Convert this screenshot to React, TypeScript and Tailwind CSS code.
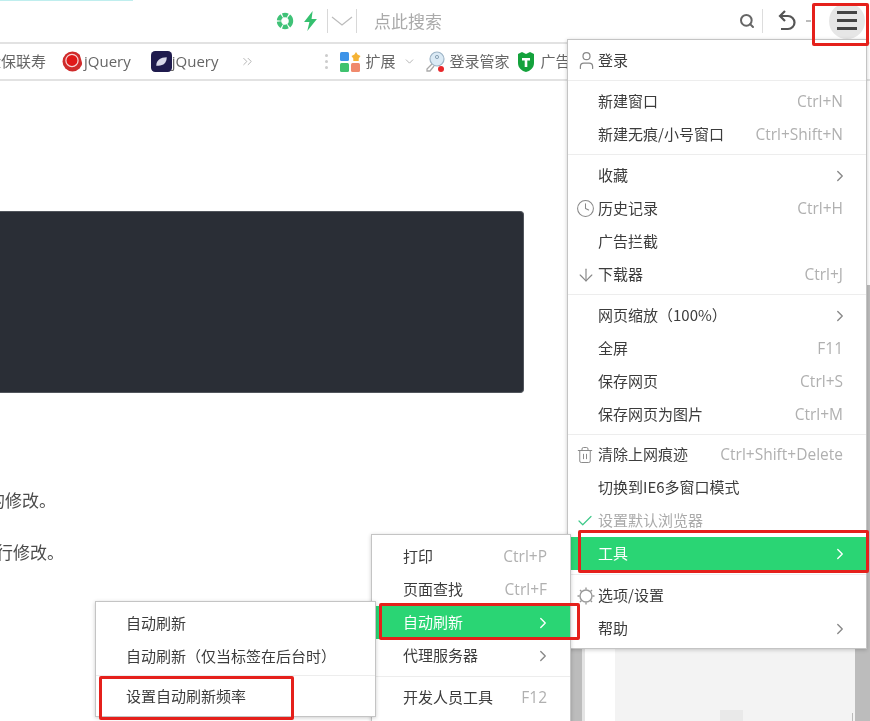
import type { ReactNode } from "react";
import { ArrowDown, Check, ChevronDown, ChevronRight, ChevronsRight, Clock, Search, Trash2, User } from "lucide-react";

const latin = "font-['Open_Sans','Noto_Sans_CJK_SC',sans-serif]";

interface RowProps {
  label: string;
  shortcut?: string;
  arrow?: boolean;
  icon?: ReactNode;
  active?: boolean;
  muted?: boolean;
  indent?: string;
  right?: string;
}

function Row({ label, shortcut, arrow, icon, active, muted, indent = "w-[30px]", right = "pr-[23px]" }: RowProps) {
  return (
    <div className={`flex h-[33px] items-center ${right} ${active ? "bg-[#2ad574] text-white" : muted ? "text-[#aaaaaa]" : "text-[#3c3c3c]"}`}>
      <span className={`flex shrink-0 justify-start pl-[8px] text-[#888888] ${indent}`}>{icon}</span>
      <span className="flex-1 whitespace-nowrap">{label}</span>
      {shortcut && <span className={`${latin} text-[15.5px] text-[#b0b0b0]`}>{shortcut}</span>}
      {arrow && <ChevronRight className={`h-[18px] w-[18px] ${active ? "text-white" : "text-[#888888]"}`} strokeWidth={1.8} />}
    </div>
  );
}

function GearIcon() {
  return (
    <svg viewBox="0 0 20 20" className="h-[20px] w-[20px]" fill="none" stroke="#999999" strokeWidth="1.4">
      <circle cx="10" cy="10" r="6" />
      <path d="M10 1.5v2M10 16.5v2M1.5 10h2M16.5 10h2M4 4l1.5 1.5M14.5 14.5 16 16M4 16l1.5-1.5M14.5 5.5 16 4" />
    </svg>
  );
}

function RedBox({ className }: { className: string }) {
  return <div className={`pointer-events-none absolute rounded-[2px] border-[3px] border-[#e5201b] ${className}`} />;
}

function Divider() {
  return <div className="h-px bg-[#ededed]" />;
}

export default function App() {
  return (
    <div className="relative h-[721px] w-[870px] overflow-hidden bg-white font-['Noto_Sans_CJK_SC',sans-serif] text-[15px] blur-[0.4px]">
      {/* address bar */}
      <div className="relative flex h-[44px] items-center border-b-2 border-[#e2e2e2] pb-[1px]">
        <div className="absolute left-0 top-0 h-px w-[133px] bg-[#bfeeee]" />
        <svg viewBox="0 0 18 18" className="ml-[276px] h-[18px] w-[18px]" fill="none">
          <circle cx="9" cy="9" r="6" stroke="#3fc277" strokeWidth="4.4" strokeDasharray="5.2 1.1" />
        </svg>
        <svg viewBox="0 0 14 20" className="ml-[9px] h-[20px] w-[15px]" fill="#35c06f" preserveAspectRatio="none">
          <path d="M9 0 1 11h5l-2 9 9-12H8l1-8z" />
        </svg>
        <div className="ml-[9px] h-[24px] w-px bg-[#d8d8d8]" />
        <svg viewBox="0 0 22 10" className="mx-[3px] h-[10px] w-[22px]" fill="none" stroke="#bbbbbb" strokeWidth="1.2">
          <path d="M1 1l10 8 10-8" />
        </svg>
        <div className="h-[24px] w-px bg-[#d8d8d8]" />
        <span className="ml-[17px] text-[17px] text-[#aaaaaa]">点此搜索</span>
        <Search className="ml-[297px] h-[16px] w-[16px] text-[#666666]" strokeWidth={3} />
        <div className="ml-[7px] h-[24px] w-px bg-[#dddddd]" />
        <svg viewBox="0 0 18 22" className="ml-[15px] h-[22px] w-[18px]" fill="none" stroke="#555555" strokeWidth="2.2">
          <path d="M2 6h8a6.5 6.5 0 0 1 0 13H3" />
          <path d="M7 1 2 6l5 5" />
        </svg>
        <span className="ml-[10px] h-[2px] w-[5px] bg-[#bbbbbb]" />
        <div className="ml-[18px] flex h-[36px] w-[36px] flex-col items-center justify-center gap-[5px] rounded-full bg-[#e6e6e6]">
          <span className="h-[3px] w-[20px] bg-[#444444]" />
          <span className="h-[3px] w-[20px] bg-[#444444]" />
          <span className="h-[3px] w-[20px] bg-[#444444]" />
        </div>
      </div>

      {/* bookmark bar */}
      <div className="flex h-[37px] items-center border-b-2 border-[#e2e2e2] text-[15px] text-[#666666]">
        <span className="ml-[-14px] whitespace-nowrap">险保联寿</span>
        <svg viewBox="0 0 20 20" className="ml-[16px] h-[21px] w-[21px] shrink-0">
          <circle cx="10" cy="10" r="9.5" fill="#cf2b2b" />
          <circle cx="9.5" cy="9" r="5.8" fill="#e01818" stroke="#f6d4d4" strokeWidth="1.2" />
          <path d="M16.5 2 20 6.5v8z" fill="#ffffff" />
        </svg>
        <span className={`${latin} ml-[1px]`}>jQuery</span>
        <svg viewBox="0 0 20 20" className="ml-[20px] h-[21px] w-[21px] shrink-0">
          <rect width="20" height="20" rx="4" fill="#1f1b4d" />
          <path d="M5 14c0-5 4-8 10-8 0 5-3 8-8 8z" fill="#d8d8e8" />
        </svg>
        <span className={latin}>jQuery</span>
        <ChevronsRight className="ml-[22px] h-[15px] w-[15px] text-[#aaaaaa]" strokeWidth={1.4} />
        <div className="ml-[70px] flex flex-col gap-[3px]">
          <span className="h-[3px] w-[3px] rounded-full bg-[#cccccc]" />
          <span className="h-[3px] w-[3px] rounded-full bg-[#cccccc]" />
          <span className="h-[3px] w-[3px] rounded-full bg-[#cccccc]" />
        </div>
        <svg viewBox="0 0 21 20" className="ml-[12px] h-[20px] w-[21px] shrink-0">
          <rect x="0" y="0" width="9" height="9" rx="1.5" fill="#3d93e8" />
          <path d="M16 0l1.6 2.4L20.5 4l-1.8 2.4v2.6h-5.4V6.4L11.5 4l2.9-1.6z" fill="#f5b335" />
          <rect x="0" y="11" width="9" height="9" rx="1.5" fill="#3fc26f" />
          <rect x="11" y="11" width="9" height="9" rx="1.5" fill="#f08a6d" />
        </svg>
        <span className="ml-[4px] whitespace-nowrap">扩展</span>
        <ChevronDown className="ml-[7px] h-[13px] w-[13px] text-[#aaaaaa]" strokeWidth={1.6} />
        <svg viewBox="0 0 21 22" className="ml-[9px] h-[22px] w-[21px] shrink-0" fill="none">
          <circle cx="12" cy="8" r="7" fill="#dbeaf5" stroke="#9db4c6" strokeWidth="1.2" />
          <circle cx="12" cy="6" r="1.6" stroke="#8aa2b5" />
          <path d="M7 13 2 18v2h3l4-5" stroke="#aaaaaa" strokeWidth="1.3" />
          <circle cx="16" cy="18" r="3" fill="#e8262a" />
        </svg>
        <span className="ml-[4px] whitespace-nowrap">登录管家</span>
        <svg viewBox="0 0 20 22" className="ml-[6px] h-[22px] w-[20px] shrink-0">
          <path d="M2 3 6 1l4 2 4-2 4 2v9c0 5-4 8-8 9-4-1-8-4-8-9z" fill="#14a23c" />
          <path d="M6 7h8v2.5h-2.7V16H8.7V9.5H6z" fill="#ffffff" />
        </svg>
        <span className="ml-[5px] whitespace-nowrap">广告</span>
      </div>

      {/* page content */}
      <div className="mt-[130px] h-[182px] w-[524px] rounded-r-[4px] border border-l-0 border-[#51555c] bg-[#2a2e36]" />
      <div className="mt-[81px] text-[17px] leading-[52px] text-[#4c4c4c]">
        <p className="ml-[-12px]">的修改。</p>
        <p className="ml-[-21px]">进行修改。</p>
      </div>

      {/* sidebar behind the menus */}
      <div className="absolute bottom-0 left-[570px] right-0 top-[285px] flex">
        <div className="w-[12px] bg-[#bcbcbc]" />
        <div className="w-[3px] bg-[#e4e4e4]" />
        <div className="w-[30px] bg-white" />
        <div className="flex flex-1 items-end bg-[#f3f3f3]">
          <div className="ml-[105px] h-[11px] w-[23px] bg-[#e9e9e9]" />
          <div className="ml-[109px] h-[8px] w-px bg-[#bbbbbb]" />
        </div>
        <div className="w-[15px] bg-[#bcbcbc]" />
      </div>

      {/* main menu */}
      <div className="absolute left-[567px] top-[39px] w-[300px] border border-[#c4c4c4] bg-white shadow-[0_1px_4px_rgba(0,0,0,0.2)]">
        <div className="pb-[3px] pt-[4px]">
          <Row label="登录" icon={<User className="h-[21px] w-[21px]" strokeWidth={1.4} />} />
        </div>
        <Divider />
        <div className="pb-[3px] pt-[4px]">
          <Row label="新建窗口" shortcut="Ctrl+N" />
          <Row label="新建无痕/小号窗口" shortcut="Ctrl+Shift+N" />
        </div>
        <Divider />
        <div className="pb-[3px] pt-[4px]">
          <Row label="收藏" arrow right="pr-[17px]" />
          <Row label="历史记录" shortcut="Ctrl+H" icon={<Clock className="h-[19px] w-[19px]" strokeWidth={1.3} />} />
          <Row label="广告拦截" />
          <Row label="下载器" shortcut="Ctrl+J" icon={<ArrowDown className="h-[20px] w-[20px]" strokeWidth={1.4} />} />
        </div>
        <Divider />
        <div className="pb-[3px] pt-[4px]">
          <Row label="网页缩放（100%）" arrow right="pr-[17px]" />
          <Row label="全屏" shortcut="F11" />
          <Row label="保存网页" shortcut="Ctrl+S" />
          <Row label="保存网页为图片" shortcut="Ctrl+M" />
        </div>
        <Divider />
        <div className="pb-[4px] pt-[3px]">
          <Row label="清除上网痕迹" shortcut="Ctrl+Shift+Delete" icon={<Trash2 className="h-[18px] w-[18px]" strokeWidth={1.3} />} />
          <Row label="切换到IE6多窗口模式" />
          <Row label="设置默认浏览器" muted icon={<Check className="h-[18px] w-[18px] text-[#3fc98a]" strokeWidth={1.6} />} />
          <Row label="工具" arrow active right="pr-[17px]" />
        </div>
        <Divider />
        <div className="pb-[3px] pt-[4px]">
          <Row label="选项/设置" icon={<GearIcon />} />
          <Row label="帮助" arrow right="pr-[17px]" />
        </div>
      </div>

      {/* tools submenu */}
      <div className="absolute left-[371px] top-[534px] h-[200px] w-[200px] border border-[#c4c4c4] bg-white shadow-[0_1px_4px_rgba(0,0,0,0.2)]">
        <div className="pb-[4px] pt-[5px]">
          <Row label="打印" shortcut="Ctrl+P" indent="w-[31px]" right="pr-[23px]" />
          <Row label="页面查找" shortcut="Ctrl+F" indent="w-[31px]" right="pr-[23px]" />
          <Row label="自动刷新" arrow active indent="w-[31px]" right="pr-[18px]" />
          <Row label="代理服务器" arrow indent="w-[31px]" right="pr-[18px]" />
        </div>
        <Divider />
        <div className="pt-[4px]">
          <Row label="开发人员工具" shortcut="F12" indent="w-[31px]" right="pr-[23px]" />
        </div>
      </div>

      {/* auto refresh submenu */}
      <div className="absolute left-[95px] top-[601px] w-[281px] border border-[#c4c4c4] bg-white shadow-[0_1px_4px_rgba(0,0,0,0.2)]">
        <div className="pb-[2px] pt-[5px]">
          <Row label="自动刷新" />
          <Row label="自动刷新（仅当标签在后台时）" />
        </div>
        <Divider />
        <div className="pb-[3px] pt-[4px]">
          <Row label="设置自动刷新频率" />
        </div>
      </div>

      <RedBox className="left-[812px] top-[3px] h-[43px] w-[57px]" />
      <RedBox className="left-[578px] top-[530px] h-[43px] w-[291px]" />
      <RedBox className="left-[379px] top-[603px] h-[37px] w-[201px]" />
      <RedBox className="left-[99px] top-[676px] h-[44px] w-[195px]" />
    </div>
  );
}
